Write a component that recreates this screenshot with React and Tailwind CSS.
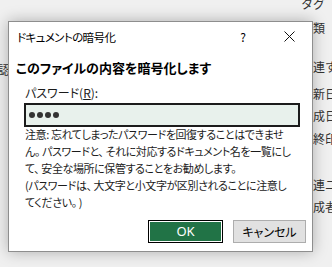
import React from "react";

const jp = "[font-family:'Noto_Sans_CJK_JP','Noto_Sans',sans-serif] [font-feature-settings:'palt']";

function P({ children }) {
  return <span className="mr-[2px]">{children}</span>;
}

export default function App() {
  const side = [
    { t: "タグ", mt: "mt-[-4px]" },
    { t: "分類", mt: "mt-[8px]" },
    { t: "関連する", mt: "mt-[23px]" },
    { t: "更新日時", mt: "mt-[11px]" },
    { t: "作成日時", mt: "mt-[6px]" },
    { t: "最終印刷日", mt: "mt-[7px]" },
    { t: "関連ユーザー", mt: "mt-[30px]" },
    { t: "作成者", mt: "mt-[6px]" },
  ];
  return (
    <div className={`relative w-[332px] h-[267px] overflow-hidden bg-[#f0f0f0] text-[#1b1b1b] ${jp}`}>
      {/* background window content */}
      <div className="flex h-full">
        <div className="w-[10px] pt-[62px] flex justify-end">
          <span className="text-[12px] leading-[16px] whitespace-nowrap text-[#333]">認</span>
        </div>
        <div className="ml-auto w-[31px] flex flex-col text-[12px] leading-[16px] text-[#333] whitespace-nowrap [font-feature-settings:normal]">
          {side.map((s) => (
            <div key={s.t} className={`h-[16px] ${s.mt}`}>{s.t}</div>
          ))}
        </div>
      </div>

      {/* dialog */}
      <div className="absolute left-[8px] top-[21px] w-[305px] h-[231px] bg-white border border-[#8e8e8e] shadow-[0_0_14px_rgba(0,0,0,0.28)] flex flex-col">
        <div className="h-[29px] flex items-center">
          <div className="flex-1 pl-[8px] text-[11.5px] leading-[16px] text-black tracking-[-0.6px] whitespace-nowrap">ドキュメントの暗号化</div>
          <div className="w-[46px] h-full flex items-center justify-center text-[12px] text-black">?</div>
          <div className="w-[46px] h-full flex items-center justify-center">
            <svg width="11" height="11" viewBox="0 0 11 11">
              <path d="M0.5 0.5 L10.5 10.5 M10.5 0.5 L0.5 10.5" stroke="#111" strokeWidth="1" fill="none" />
            </svg>
          </div>
        </div>
        <div className="mt-[8px] pl-[7px] h-[18px] text-[13px] leading-[18px] font-bold text-black whitespace-nowrap">
          このファイルの内容を暗号化します
        </div>
        <div className="mt-[8px] pl-[16px] h-[16px] text-[12px] leading-[16px] whitespace-nowrap">
          パスワード(<span className="underline">R</span>):
        </div>
        <div className="mt-[2px] ml-[15px] w-[276px] h-[24px] border-2 border-[#1c1c1c] bg-[#e8f1ec] flex items-center pl-[3px] gap-[2px]">
          <span className="w-[6px] h-[6px] rounded-full bg-[#333]" />
          <span className="w-[6px] h-[6px] rounded-full bg-[#333]" />
          <span className="w-[6px] h-[6px] rounded-full bg-[#333]" />
          <span className="w-[6px] h-[6px] rounded-full bg-[#333]" />
        </div>
        <div className="mt-[-1px] pl-[16px] text-[11px] leading-[17px] whitespace-nowrap tracking-[-0.4px]">
          <div>注意: 忘れてしまったパスワードを回復することはできませ</div>
          <div>ん<P>。</P>パスワードと<P>、</P>それに対応するドキュメント名を一覧にし</div>
          <div>て<P>、</P>安全な場所に保管することをお勧めします<P>。</P></div>
          <div>(パスワードは<P>、</P>大文字と小文字が区別されることに注意し</div>
          <div>てください<P>。</P>)</div>
        </div>
        <div className="mt-[9px] flex justify-end gap-[10px] pr-[6px]">
          <button className="w-[75px] h-[23px] bg-[#217346] border border-black shadow-[inset_0_0_0_1px_#fff] text-white text-[13px] leading-[21px] [font-family:'Noto_Sans','Liberation_Sans',sans-serif]">
            OK
          </button>
          <button className="w-[73px] h-[23px] bg-[#e1e1e1] border border-[#adadad] text-black text-[12px] leading-[21px]">
            キャンセル
          </button>
        </div>
      </div>
    </div>
  );
}
